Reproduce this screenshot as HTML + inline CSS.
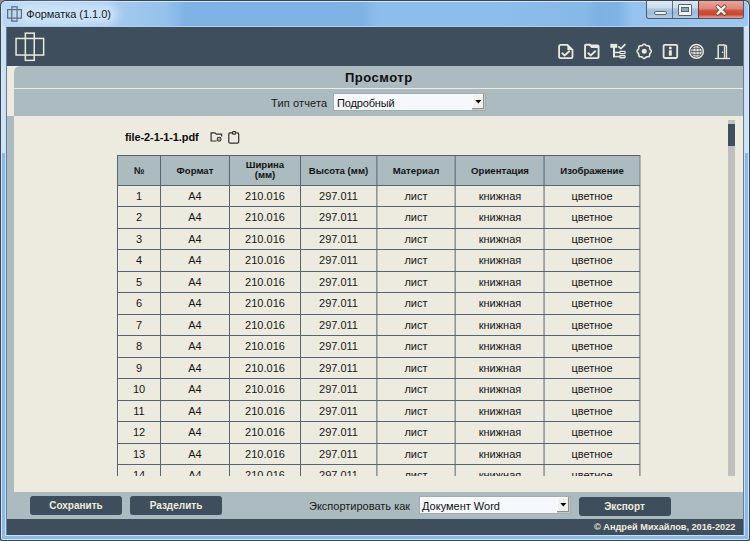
<!DOCTYPE html>
<html><head><meta charset="utf-8">
<style>
*{margin:0;padding:0;box-sizing:border-box}
html,body{width:750px;height:541px;overflow:hidden;background:#8d9297}
body{position:relative;font-family:"Liberation Sans",sans-serif;font-size:11px;color:#111}
.a{position:absolute}
.t{white-space:nowrap}
svg{overflow:visible}
</style></head><body>
<div class="a" style="left:0;top:0;width:750px;height:541px;border-radius:6px 6px 3px 3px;background:#3c4552"></div>
<div class="a" style="left:1px;top:1px;width:748px;height:539px;border-radius:5px 5px 2px 2px;background:#cfe6fb"></div>
<div class="a" style="left:2px;top:2px;width:746px;height:537px;border-radius:4px 4px 1px 1px;background:linear-gradient(180deg,#cfe3f6 0,#cfe3f6 151px,#8bbae9 151px,#8bbae9 100%)"></div>
<div class="a" style="left:2px;top:2px;width:746px;height:24px;border-radius:4px 4px 0 0;background:linear-gradient(90deg,#bcd8f4 0,#a9ccf0 98px,#95c2ed 163px,#80b3e5 183px,#7fb2e4 360px,#8cbdec 376px,#8dbdeb 498px,#86b8e8 583px,#7db0e3 598px,#80b3e5 616px,#95c3ef 630px,#9ec8f1 746px)"></div>
<div class="a" style="left:18px;top:4px;width:100px;height:20px;border-radius:10px;background:rgba(215,235,252,0.75);filter:blur(4px)"></div>
<div class="a" style="left:5px;top:26px;width:740px;height:510px;background:#c5e0fa"></div>
<div class="a" style="left:5px;top:26px;width:740px;height:1px;background:#b3cee8"></div>
<div class="a" style="left:6px;top:27px;width:738px;height:508px;background:#6a7d92"></div>
<svg class="a" style="left:0;top:0" width="30" height="27">
 <rect x="7.6" y="9.6" width="13.8" height="8.5" fill="none" stroke="#5b6d7e" stroke-width="1.2"/>
 <rect x="11.8" y="6.8" width="5.3" height="14.4" fill="none" stroke="#5b6d7e" stroke-width="1.2"/>
</svg>
<div class="a t" style="left:26.3px;top:6.49px;font-size:11px;line-height:16px;font-weight:400;color:#141a22;letter-spacing:-0.03px;">Форматка (1.1.0)</div>
<div class="a" style="left:646px;top:1px;width:98px;height:18px;border:1px solid #4f5a68;border-top:none;border-radius:0 0 3px 3px;overflow:hidden;background:linear-gradient(#dce8f4 0,#c9dbee 7px,#a9c4df 8px,#9dbcdb 12px,#b3cce6 17px)">
  <div class="a" style="left:25px;top:0;width:1px;height:18px;background:#5f6f82"></div>
  <div class="a" style="left:51px;top:0;width:46px;height:18px;background:linear-gradient(#eca59c 0,#e3968b 4px,#dd8578 8px,#cf5640 9px,#c9452f 14px,#dc8073 15px,#e2948a 17px)"></div>
  <div class="a" style="left:51px;top:0;width:1px;height:18px;background:#5a4040"></div>
  <div class="a" style="left:7px;top:10px;width:13px;height:4px;background:#f4f4f0;border:1px solid #566477;border-radius:2px"></div>
  <div class="a" style="left:31px;top:3px;width:14px;height:12px;border:1px solid #566477;background:#f6f6f2;border-radius:1px"></div>
  <div class="a" style="left:34px;top:6px;width:8px;height:5px;background:#8aa6c4;border:1px solid #566477"></div>
  <svg class="a" style="left:64px;top:3px" width="18" height="13" viewBox="0 0 18 13"><path d="M6.6,2.7 L13.5,9.6 M13.5,2.7 L6.6,9.6" stroke="#5a3a36" stroke-width="4" stroke-linecap="round"/><path d="M6.6,2.7 L13.5,9.6 M13.5,2.7 L6.6,9.6" stroke="#f6f2ea" stroke-width="2.6" stroke-linecap="round"/></svg>
</div>
<div class="a" style="left:7px;top:27px;width:736px;height:508px;background:#abbbbf;"></div>
<div class="a" style="left:7px;top:27px;width:736px;height:39px;background:#3f4e5c;"></div>
<svg class="a" style="left:0;top:0" width="60" height="66">
  <rect x="16.05" y="38.45" width="27.6" height="16.6" fill="none" stroke="#e9e8dc" stroke-width="1.5"/>
  <rect x="25.35" y="33.15" width="8.9" height="27.2" fill="none" stroke="#e9e8dc" stroke-width="1.5"/>
</svg>
<svg class="a" style="left:0;top:0" width="750" height="66">
 <g fill="none" stroke="#e9e8dc" stroke-width="2" stroke-linejoin="miter">
  <path d="M560.7,44.8 H567.4 L572.5,49.9 V56.5 Q572.5,58.1 570.9,58.1 H560.7 Q559.1,58.1 559.1,56.5 V46.4 Q559.1,44.8 560.7,44.8 Z" stroke-width="1.8"/>
  <path d="M562.3,53.3 L564.8,55.4 L569.2,51.3" stroke-linecap="round" stroke-width="1.9" stroke-linejoin="round"/>
  <path d="M585.9,43.8 H590.2 L591.2,44.6 H597.7 Q599.5,44.6 599.5,46.4 V57.3 Q599.5,59.1 597.7,59.1 H585.9 Q584.1,59.1 584.1,57.3 V45.6 Q584.1,43.8 585.9,43.8 Z M586,45.7 V57.2 H597.6 V48.1 H591.3 L589.3,45.7 Z" fill="#e9e8dc" stroke="none" fill-rule="evenodd"/>
  <path d="M588.3,53.3 L590.8,55.4 L595.2,51.3" stroke-linecap="round" stroke-width="1.9" stroke-linejoin="round"/>
  <path d="M618.9,46.9 L620.9,48.6 L624.8,44.7" stroke-width="1.7" stroke-linecap="square"/>
  <rect x="619.85" y="51.45" width="5.2" height="2.1" rx="0.5" stroke-width="1.3"/>
  <rect x="619.85" y="55.65" width="5.2" height="2.1" rx="0.5" stroke-width="1.3"/>
  <path d="M644.20,44.20 L644.48,44.23 L644.75,44.32 L645.01,44.45 L645.26,44.63 L645.49,44.83 L645.70,45.03 L645.91,45.23 L646.11,45.41 L646.32,45.55 L646.53,45.66 L646.76,45.74 L647.01,45.78 L647.28,45.80 L647.57,45.80 L647.87,45.81 L648.17,45.84 L648.47,45.89 L648.75,45.97 L649.00,46.10 L649.22,46.28 L649.40,46.50 L649.53,46.75 L649.61,47.03 L649.66,47.33 L649.69,47.63 L649.70,47.93 L649.70,48.22 L649.72,48.49 L649.76,48.74 L649.84,48.97 L649.95,49.18 L650.09,49.39 L650.27,49.59 L650.47,49.80 L650.67,50.01 L650.87,50.24 L651.05,50.49 L651.18,50.75 L651.27,51.02 L651.30,51.30 L651.27,51.58 L651.18,51.85 L651.05,52.11 L650.87,52.36 L650.67,52.59 L650.47,52.80 L650.27,53.01 L650.09,53.21 L649.95,53.42 L649.84,53.63 L649.76,53.86 L649.72,54.11 L649.70,54.38 L649.70,54.67 L649.69,54.97 L649.66,55.27 L649.61,55.57 L649.53,55.85 L649.40,56.10 L649.22,56.32 L649.00,56.50 L648.75,56.63 L648.47,56.71 L648.17,56.76 L647.87,56.79 L647.57,56.80 L647.28,56.80 L647.01,56.82 L646.76,56.86 L646.53,56.94 L646.32,57.05 L646.11,57.19 L645.91,57.37 L645.70,57.57 L645.49,57.77 L645.26,57.97 L645.01,58.15 L644.75,58.28 L644.48,58.37 L644.20,58.40 L643.92,58.37 L643.65,58.28 L643.39,58.15 L643.14,57.97 L642.91,57.77 L642.70,57.57 L642.49,57.37 L642.29,57.19 L642.08,57.05 L641.87,56.94 L641.64,56.86 L641.39,56.82 L641.12,56.80 L640.83,56.80 L640.53,56.79 L640.23,56.76 L639.93,56.71 L639.65,56.63 L639.40,56.50 L639.18,56.32 L639.00,56.10 L638.87,55.85 L638.79,55.57 L638.74,55.27 L638.71,54.97 L638.70,54.67 L638.70,54.38 L638.68,54.11 L638.64,53.86 L638.56,53.63 L638.45,53.42 L638.31,53.21 L638.13,53.01 L637.93,52.80 L637.73,52.59 L637.53,52.36 L637.35,52.11 L637.22,51.85 L637.13,51.58 L637.10,51.30 L637.13,51.02 L637.22,50.75 L637.35,50.49 L637.53,50.24 L637.73,50.01 L637.93,49.80 L638.13,49.59 L638.31,49.39 L638.45,49.18 L638.56,48.97 L638.64,48.74 L638.68,48.49 L638.70,48.22 L638.70,47.93 L638.71,47.63 L638.74,47.33 L638.79,47.03 L638.87,46.75 L639.00,46.50 L639.18,46.28 L639.40,46.10 L639.65,45.97 L639.93,45.89 L640.23,45.84 L640.53,45.81 L640.83,45.80 L641.12,45.80 L641.39,45.78 L641.64,45.74 L641.87,45.66 L642.08,45.55 L642.29,45.41 L642.49,45.23 L642.70,45.03 L642.91,44.83 L643.14,44.63 L643.39,44.45 L643.65,44.32 L643.92,44.23 L644.20,44.20 Z" stroke-width="1.6"/>
  <rect x="663.6" y="44.8" width="13.6" height="13.2" rx="1.2" stroke-width="1.8"/>
  <circle cx="696.4" cy="51.4" r="6.95" stroke-width="1.5"/>
  
  <path d="M718.2,58 V45.8 Q718.2,44.9 719.1,44.9 H724.3 L726.4,46 V58" stroke-width="1.5"/><path d="M724.4,45.4 V58" stroke-width="1.1"/>
  <path d="M714.9,58.5 H730.1" stroke-width="1.3"/>
 </g>
 <g fill="#e9e8dc">
  <path d="M567.4,44.8 L572.5,49.9 H567.4 Z"/>
  <rect x="610.3" y="43.9" width="6.9" height="3.9"/>
  <rect x="613" y="47" width="2" height="10.3"/>
  <rect x="613" y="51.7" width="6.5" height="1.5"/>
  <rect x="613" y="55.8" width="6.5" height="1.5"/>
  <circle cx="644.2" cy="51.3" r="2.5"/>
  <circle cx="670.3" cy="47.9" r="1.5"/>
  <rect x="668.9" y="50.3" width="2.9" height="5.4"/>
  <circle cx="722.6" cy="52.2" r="0.8"/>
 </g>
 <circle cx="696.4" cy="51.4" r="5.3" fill="#e9e8dc"/>
 <g stroke="#3f4e5c" stroke-width="0.75" fill="none">
  <clipPath id="gc"><circle cx="696.4" cy="51.4" r="5.3"/></clipPath>
  <g clip-path="url(#gc)">
   <path d="M690,48.4 H703 M690,51.5 H703 M690,54.6 H703 M692.9,44 V59 M696,44 V59 M699.1,44 V59"/>
  </g>
 </g>
</svg>
<div class="a" style="left:7px;top:66px;width:14px;height:50px;background:#edebdf;"></div>
<div class="a" style="left:14px;top:66px;width:729px;height:50px;background:#abbbbf;border-radius:6px 0 0 0;"></div>
<div class="a" style="left:14px;top:88px;width:729px;height:1px;background:#edebdf;"></div>
<div class="a t" style="left:345px;top:67.70px;font-size:13px;line-height:20px;font-weight:700;color:#0e0e0e;letter-spacing:0.5px;">Просмотр</div>
<div class="a t" style="left:271px;top:94.89px;font-size:11px;line-height:16px;font-weight:400;color:#1a1a1a;letter-spacing:0.15px;">Тип отчета</div>
<div class="a" style="left:333px;top:93px;width:153px;height:18px;background:#f5f8fc;border:1px solid #a6abae;"></div>
<div class="a t" style="left:337px;top:94.89px;font-size:11px;line-height:16px;font-weight:400;color:#111;letter-spacing:-0.15px;">Подробный</div>
<div class="a" style="left:472px;top:94px;width:13px;height:16px;background:#f1f1ef;box-shadow:inset -1px -1px #8f8f8f,inset 1px 1px #fdfdfd;border-right:1px solid #c9c9c7;border-bottom:1px solid #c9c9c7;"></div>
<svg class="a" style="left:0;top:0" width="750" height="541"><path d="M475.3,100 H481.3 L478.3,103.4 Z" fill="#000"/></svg>
<div class="a" style="left:7px;top:116px;width:7px;height:376px;background:#abbbbf;"></div>
<div class="a" style="left:14px;top:116px;width:729px;height:376px;background:#edebdf;"></div>
<div class="a t" style="left:125px;top:129.39px;font-size:11px;line-height:16px;font-weight:700;color:#0e0e0e;letter-spacing:-0.1px;">file-2-1-1-1.pdf</div>
<svg class="a" style="left:0;top:0" width="250" height="150">
 <g fill="none" stroke="#2e2e2e" stroke-width="1.2">
  <path d="M216.6,141 H211.1 V132.8 H214.9 L216.4,134.2 H221.6 V136.6"/>
  <circle cx="219.1" cy="139.2" r="1.9" stroke-width="1.1"/>
  <path d="M232,132.8 H230.2 Q228.8,132.8 228.8,134.2 V142.1 Q228.8,143.2 230.2,143.2 H237.4 Q238.7,143.2 238.7,142.1 V134.2 Q238.7,132.8 237.4,132.8 H236.6"/>
  <rect x="232.4" y="131.6" width="3.5" height="2.5" rx="1"/>
 </g>
 <g fill="#2e2e2e"><circle cx="219.1" cy="139.1" r="0.7"/></g>
</svg>
<div class="a" style="left:0;top:0;width:750px;height:476px;overflow:hidden">
<div class="a" style="left:117px;top:155px;width:522px;height:30px;background:#abbbbf;"></div>
<div class="a" style="left:117px;top:155px;width:1px;height:321px;background:#56656f;"></div>
<div class="a" style="left:160px;top:155px;width:1px;height:321px;background:#56656f;"></div>
<div class="a" style="left:229px;top:155px;width:1px;height:321px;background:#56656f;"></div>
<div class="a" style="left:300px;top:155px;width:1px;height:321px;background:#56656f;"></div>
<div class="a" style="left:376px;top:155px;width:1px;height:321px;background:#56656f;opacity:0.62;"></div>
<div class="a" style="left:377px;top:155px;width:1px;height:321px;background:#56656f;opacity:0.38;"></div>
<div class="a" style="left:454px;top:155px;width:1px;height:321px;background:#56656f;opacity:0.35;"></div>
<div class="a" style="left:455px;top:155px;width:1px;height:321px;background:#56656f;opacity:0.65;"></div>
<div class="a" style="left:543px;top:155px;width:1px;height:321px;background:#56656f;opacity:0.45;"></div>
<div class="a" style="left:544px;top:155px;width:1px;height:321px;background:#56656f;opacity:0.55;"></div>
<div class="a" style="left:639px;top:155px;width:1px;height:321px;background:#56656f;opacity:0.6;"></div>
<div class="a" style="left:640px;top:155px;width:1px;height:321px;background:#56656f;opacity:0.4;"></div>
<div class="a" style="left:117px;top:155px;width:523px;height:1px;background:#56656f;"></div>
<div class="a" style="left:117px;top:185px;width:523px;height:1px;background:#56656f;"></div>
<div class="a" style="left:117px;top:206px;width:523px;height:1px;background:#56656f;"></div>
<div class="a" style="left:117px;top:228px;width:523px;height:1px;background:#56656f;"></div>
<div class="a" style="left:117px;top:249px;width:523px;height:1px;background:#56656f;"></div>
<div class="a" style="left:117px;top:271px;width:523px;height:1px;background:#56656f;"></div>
<div class="a" style="left:117px;top:292px;width:523px;height:1px;background:#56656f;"></div>
<div class="a" style="left:117px;top:314px;width:523px;height:1px;background:#56656f;"></div>
<div class="a" style="left:117px;top:335px;width:523px;height:1px;background:#56656f;"></div>
<div class="a" style="left:117px;top:357px;width:523px;height:1px;background:#56656f;"></div>
<div class="a" style="left:117px;top:378px;width:523px;height:1px;background:#56656f;"></div>
<div class="a" style="left:117px;top:400px;width:523px;height:1px;background:#56656f;"></div>
<div class="a" style="left:117px;top:421px;width:523px;height:1px;background:#56656f;"></div>
<div class="a" style="left:117px;top:443px;width:523px;height:1px;background:#56656f;"></div>
<div class="a" style="left:117px;top:464px;width:523px;height:1px;background:#56656f;"></div>
<div class="a" style="left:117px;top:486px;width:523px;height:1px;background:#56656f;"></div>
<div class="a t" style="left:118px;top:163.87px;font-size:9.6px;line-height:14px;font-weight:700;color:#141414;width:42px;text-align:center;">№</div>
<div class="a t" style="left:161px;top:163.87px;font-size:9.6px;line-height:14px;font-weight:700;color:#141414;width:68px;text-align:center;">Формат</div>
<div class="a t" style="left:230px;top:158.47px;font-size:9.6px;line-height:14px;font-weight:700;color:#141414;width:70px;text-align:center;">Ширина</div>
<div class="a t" style="left:230px;top:168.47px;font-size:9.6px;line-height:14px;font-weight:700;color:#141414;width:70px;text-align:center;">(мм)</div>
<div class="a t" style="left:301px;top:163.87px;font-size:9.6px;line-height:14px;font-weight:700;color:#141414;width:75px;text-align:center;">Высота (мм)</div>
<div class="a t" style="left:377px;top:163.87px;font-size:9.6px;line-height:14px;font-weight:700;color:#141414;width:78px;text-align:center;">Материал</div>
<div class="a t" style="left:456px;top:163.87px;font-size:9.6px;line-height:14px;font-weight:700;color:#141414;width:88px;text-align:center;">Ориентация</div>
<div class="a t" style="left:545px;top:163.87px;font-size:9.6px;line-height:14px;font-weight:700;color:#141414;width:94px;text-align:center;">Изображение</div>
<div class="a t" style="left:118px;top:187.89px;font-size:11px;line-height:16px;font-weight:400;color:#161616;width:42px;text-align:center;">1</div>
<div class="a t" style="left:161px;top:187.89px;font-size:11px;line-height:16px;font-weight:400;color:#161616;width:68px;text-align:center;">A4</div>
<div class="a t" style="left:230px;top:187.89px;font-size:11px;line-height:16px;font-weight:400;color:#161616;width:70px;text-align:center;">210.016</div>
<div class="a t" style="left:301px;top:187.89px;font-size:11px;line-height:16px;font-weight:400;color:#161616;width:75px;text-align:center;">297.011</div>
<div class="a t" style="left:377px;top:187.89px;font-size:11px;line-height:16px;font-weight:400;color:#161616;width:78px;text-align:center;">лист</div>
<div class="a t" style="left:456px;top:187.89px;font-size:11px;line-height:16px;font-weight:400;color:#161616;width:88px;text-align:center;">книжная</div>
<div class="a t" style="left:545px;top:187.89px;font-size:11px;line-height:16px;font-weight:400;color:#161616;width:94px;text-align:center;">цветное</div>
<div class="a t" style="left:118px;top:208.89px;font-size:11px;line-height:16px;font-weight:400;color:#161616;width:42px;text-align:center;">2</div>
<div class="a t" style="left:161px;top:208.89px;font-size:11px;line-height:16px;font-weight:400;color:#161616;width:68px;text-align:center;">A4</div>
<div class="a t" style="left:230px;top:208.89px;font-size:11px;line-height:16px;font-weight:400;color:#161616;width:70px;text-align:center;">210.016</div>
<div class="a t" style="left:301px;top:208.89px;font-size:11px;line-height:16px;font-weight:400;color:#161616;width:75px;text-align:center;">297.011</div>
<div class="a t" style="left:377px;top:208.89px;font-size:11px;line-height:16px;font-weight:400;color:#161616;width:78px;text-align:center;">лист</div>
<div class="a t" style="left:456px;top:208.89px;font-size:11px;line-height:16px;font-weight:400;color:#161616;width:88px;text-align:center;">книжная</div>
<div class="a t" style="left:545px;top:208.89px;font-size:11px;line-height:16px;font-weight:400;color:#161616;width:94px;text-align:center;">цветное</div>
<div class="a t" style="left:118px;top:230.89px;font-size:11px;line-height:16px;font-weight:400;color:#161616;width:42px;text-align:center;">3</div>
<div class="a t" style="left:161px;top:230.89px;font-size:11px;line-height:16px;font-weight:400;color:#161616;width:68px;text-align:center;">A4</div>
<div class="a t" style="left:230px;top:230.89px;font-size:11px;line-height:16px;font-weight:400;color:#161616;width:70px;text-align:center;">210.016</div>
<div class="a t" style="left:301px;top:230.89px;font-size:11px;line-height:16px;font-weight:400;color:#161616;width:75px;text-align:center;">297.011</div>
<div class="a t" style="left:377px;top:230.89px;font-size:11px;line-height:16px;font-weight:400;color:#161616;width:78px;text-align:center;">лист</div>
<div class="a t" style="left:456px;top:230.89px;font-size:11px;line-height:16px;font-weight:400;color:#161616;width:88px;text-align:center;">книжная</div>
<div class="a t" style="left:545px;top:230.89px;font-size:11px;line-height:16px;font-weight:400;color:#161616;width:94px;text-align:center;">цветное</div>
<div class="a t" style="left:118px;top:251.89px;font-size:11px;line-height:16px;font-weight:400;color:#161616;width:42px;text-align:center;">4</div>
<div class="a t" style="left:161px;top:251.89px;font-size:11px;line-height:16px;font-weight:400;color:#161616;width:68px;text-align:center;">A4</div>
<div class="a t" style="left:230px;top:251.89px;font-size:11px;line-height:16px;font-weight:400;color:#161616;width:70px;text-align:center;">210.016</div>
<div class="a t" style="left:301px;top:251.89px;font-size:11px;line-height:16px;font-weight:400;color:#161616;width:75px;text-align:center;">297.011</div>
<div class="a t" style="left:377px;top:251.89px;font-size:11px;line-height:16px;font-weight:400;color:#161616;width:78px;text-align:center;">лист</div>
<div class="a t" style="left:456px;top:251.89px;font-size:11px;line-height:16px;font-weight:400;color:#161616;width:88px;text-align:center;">книжная</div>
<div class="a t" style="left:545px;top:251.89px;font-size:11px;line-height:16px;font-weight:400;color:#161616;width:94px;text-align:center;">цветное</div>
<div class="a t" style="left:118px;top:273.89px;font-size:11px;line-height:16px;font-weight:400;color:#161616;width:42px;text-align:center;">5</div>
<div class="a t" style="left:161px;top:273.89px;font-size:11px;line-height:16px;font-weight:400;color:#161616;width:68px;text-align:center;">A4</div>
<div class="a t" style="left:230px;top:273.89px;font-size:11px;line-height:16px;font-weight:400;color:#161616;width:70px;text-align:center;">210.016</div>
<div class="a t" style="left:301px;top:273.89px;font-size:11px;line-height:16px;font-weight:400;color:#161616;width:75px;text-align:center;">297.011</div>
<div class="a t" style="left:377px;top:273.89px;font-size:11px;line-height:16px;font-weight:400;color:#161616;width:78px;text-align:center;">лист</div>
<div class="a t" style="left:456px;top:273.89px;font-size:11px;line-height:16px;font-weight:400;color:#161616;width:88px;text-align:center;">книжная</div>
<div class="a t" style="left:545px;top:273.89px;font-size:11px;line-height:16px;font-weight:400;color:#161616;width:94px;text-align:center;">цветное</div>
<div class="a t" style="left:118px;top:294.89px;font-size:11px;line-height:16px;font-weight:400;color:#161616;width:42px;text-align:center;">6</div>
<div class="a t" style="left:161px;top:294.89px;font-size:11px;line-height:16px;font-weight:400;color:#161616;width:68px;text-align:center;">A4</div>
<div class="a t" style="left:230px;top:294.89px;font-size:11px;line-height:16px;font-weight:400;color:#161616;width:70px;text-align:center;">210.016</div>
<div class="a t" style="left:301px;top:294.89px;font-size:11px;line-height:16px;font-weight:400;color:#161616;width:75px;text-align:center;">297.011</div>
<div class="a t" style="left:377px;top:294.89px;font-size:11px;line-height:16px;font-weight:400;color:#161616;width:78px;text-align:center;">лист</div>
<div class="a t" style="left:456px;top:294.89px;font-size:11px;line-height:16px;font-weight:400;color:#161616;width:88px;text-align:center;">книжная</div>
<div class="a t" style="left:545px;top:294.89px;font-size:11px;line-height:16px;font-weight:400;color:#161616;width:94px;text-align:center;">цветное</div>
<div class="a t" style="left:118px;top:316.89px;font-size:11px;line-height:16px;font-weight:400;color:#161616;width:42px;text-align:center;">7</div>
<div class="a t" style="left:161px;top:316.89px;font-size:11px;line-height:16px;font-weight:400;color:#161616;width:68px;text-align:center;">A4</div>
<div class="a t" style="left:230px;top:316.89px;font-size:11px;line-height:16px;font-weight:400;color:#161616;width:70px;text-align:center;">210.016</div>
<div class="a t" style="left:301px;top:316.89px;font-size:11px;line-height:16px;font-weight:400;color:#161616;width:75px;text-align:center;">297.011</div>
<div class="a t" style="left:377px;top:316.89px;font-size:11px;line-height:16px;font-weight:400;color:#161616;width:78px;text-align:center;">лист</div>
<div class="a t" style="left:456px;top:316.89px;font-size:11px;line-height:16px;font-weight:400;color:#161616;width:88px;text-align:center;">книжная</div>
<div class="a t" style="left:545px;top:316.89px;font-size:11px;line-height:16px;font-weight:400;color:#161616;width:94px;text-align:center;">цветное</div>
<div class="a t" style="left:118px;top:337.89px;font-size:11px;line-height:16px;font-weight:400;color:#161616;width:42px;text-align:center;">8</div>
<div class="a t" style="left:161px;top:337.89px;font-size:11px;line-height:16px;font-weight:400;color:#161616;width:68px;text-align:center;">A4</div>
<div class="a t" style="left:230px;top:337.89px;font-size:11px;line-height:16px;font-weight:400;color:#161616;width:70px;text-align:center;">210.016</div>
<div class="a t" style="left:301px;top:337.89px;font-size:11px;line-height:16px;font-weight:400;color:#161616;width:75px;text-align:center;">297.011</div>
<div class="a t" style="left:377px;top:337.89px;font-size:11px;line-height:16px;font-weight:400;color:#161616;width:78px;text-align:center;">лист</div>
<div class="a t" style="left:456px;top:337.89px;font-size:11px;line-height:16px;font-weight:400;color:#161616;width:88px;text-align:center;">книжная</div>
<div class="a t" style="left:545px;top:337.89px;font-size:11px;line-height:16px;font-weight:400;color:#161616;width:94px;text-align:center;">цветное</div>
<div class="a t" style="left:118px;top:359.89px;font-size:11px;line-height:16px;font-weight:400;color:#161616;width:42px;text-align:center;">9</div>
<div class="a t" style="left:161px;top:359.89px;font-size:11px;line-height:16px;font-weight:400;color:#161616;width:68px;text-align:center;">A4</div>
<div class="a t" style="left:230px;top:359.89px;font-size:11px;line-height:16px;font-weight:400;color:#161616;width:70px;text-align:center;">210.016</div>
<div class="a t" style="left:301px;top:359.89px;font-size:11px;line-height:16px;font-weight:400;color:#161616;width:75px;text-align:center;">297.011</div>
<div class="a t" style="left:377px;top:359.89px;font-size:11px;line-height:16px;font-weight:400;color:#161616;width:78px;text-align:center;">лист</div>
<div class="a t" style="left:456px;top:359.89px;font-size:11px;line-height:16px;font-weight:400;color:#161616;width:88px;text-align:center;">книжная</div>
<div class="a t" style="left:545px;top:359.89px;font-size:11px;line-height:16px;font-weight:400;color:#161616;width:94px;text-align:center;">цветное</div>
<div class="a t" style="left:118px;top:380.89px;font-size:11px;line-height:16px;font-weight:400;color:#161616;width:42px;text-align:center;">10</div>
<div class="a t" style="left:161px;top:380.89px;font-size:11px;line-height:16px;font-weight:400;color:#161616;width:68px;text-align:center;">A4</div>
<div class="a t" style="left:230px;top:380.89px;font-size:11px;line-height:16px;font-weight:400;color:#161616;width:70px;text-align:center;">210.016</div>
<div class="a t" style="left:301px;top:380.89px;font-size:11px;line-height:16px;font-weight:400;color:#161616;width:75px;text-align:center;">297.011</div>
<div class="a t" style="left:377px;top:380.89px;font-size:11px;line-height:16px;font-weight:400;color:#161616;width:78px;text-align:center;">лист</div>
<div class="a t" style="left:456px;top:380.89px;font-size:11px;line-height:16px;font-weight:400;color:#161616;width:88px;text-align:center;">книжная</div>
<div class="a t" style="left:545px;top:380.89px;font-size:11px;line-height:16px;font-weight:400;color:#161616;width:94px;text-align:center;">цветное</div>
<div class="a t" style="left:118px;top:402.89px;font-size:11px;line-height:16px;font-weight:400;color:#161616;width:42px;text-align:center;">11</div>
<div class="a t" style="left:161px;top:402.89px;font-size:11px;line-height:16px;font-weight:400;color:#161616;width:68px;text-align:center;">A4</div>
<div class="a t" style="left:230px;top:402.89px;font-size:11px;line-height:16px;font-weight:400;color:#161616;width:70px;text-align:center;">210.016</div>
<div class="a t" style="left:301px;top:402.89px;font-size:11px;line-height:16px;font-weight:400;color:#161616;width:75px;text-align:center;">297.011</div>
<div class="a t" style="left:377px;top:402.89px;font-size:11px;line-height:16px;font-weight:400;color:#161616;width:78px;text-align:center;">лист</div>
<div class="a t" style="left:456px;top:402.89px;font-size:11px;line-height:16px;font-weight:400;color:#161616;width:88px;text-align:center;">книжная</div>
<div class="a t" style="left:545px;top:402.89px;font-size:11px;line-height:16px;font-weight:400;color:#161616;width:94px;text-align:center;">цветное</div>
<div class="a t" style="left:118px;top:423.89px;font-size:11px;line-height:16px;font-weight:400;color:#161616;width:42px;text-align:center;">12</div>
<div class="a t" style="left:161px;top:423.89px;font-size:11px;line-height:16px;font-weight:400;color:#161616;width:68px;text-align:center;">A4</div>
<div class="a t" style="left:230px;top:423.89px;font-size:11px;line-height:16px;font-weight:400;color:#161616;width:70px;text-align:center;">210.016</div>
<div class="a t" style="left:301px;top:423.89px;font-size:11px;line-height:16px;font-weight:400;color:#161616;width:75px;text-align:center;">297.011</div>
<div class="a t" style="left:377px;top:423.89px;font-size:11px;line-height:16px;font-weight:400;color:#161616;width:78px;text-align:center;">лист</div>
<div class="a t" style="left:456px;top:423.89px;font-size:11px;line-height:16px;font-weight:400;color:#161616;width:88px;text-align:center;">книжная</div>
<div class="a t" style="left:545px;top:423.89px;font-size:11px;line-height:16px;font-weight:400;color:#161616;width:94px;text-align:center;">цветное</div>
<div class="a t" style="left:118px;top:445.89px;font-size:11px;line-height:16px;font-weight:400;color:#161616;width:42px;text-align:center;">13</div>
<div class="a t" style="left:161px;top:445.89px;font-size:11px;line-height:16px;font-weight:400;color:#161616;width:68px;text-align:center;">A4</div>
<div class="a t" style="left:230px;top:445.89px;font-size:11px;line-height:16px;font-weight:400;color:#161616;width:70px;text-align:center;">210.016</div>
<div class="a t" style="left:301px;top:445.89px;font-size:11px;line-height:16px;font-weight:400;color:#161616;width:75px;text-align:center;">297.011</div>
<div class="a t" style="left:377px;top:445.89px;font-size:11px;line-height:16px;font-weight:400;color:#161616;width:78px;text-align:center;">лист</div>
<div class="a t" style="left:456px;top:445.89px;font-size:11px;line-height:16px;font-weight:400;color:#161616;width:88px;text-align:center;">книжная</div>
<div class="a t" style="left:545px;top:445.89px;font-size:11px;line-height:16px;font-weight:400;color:#161616;width:94px;text-align:center;">цветное</div>
<div class="a t" style="left:118px;top:466.89px;font-size:11px;line-height:16px;font-weight:400;color:#161616;width:42px;text-align:center;">14</div>
<div class="a t" style="left:161px;top:466.89px;font-size:11px;line-height:16px;font-weight:400;color:#161616;width:68px;text-align:center;">A4</div>
<div class="a t" style="left:230px;top:466.89px;font-size:11px;line-height:16px;font-weight:400;color:#161616;width:70px;text-align:center;">210.016</div>
<div class="a t" style="left:301px;top:466.89px;font-size:11px;line-height:16px;font-weight:400;color:#161616;width:75px;text-align:center;">297.011</div>
<div class="a t" style="left:377px;top:466.89px;font-size:11px;line-height:16px;font-weight:400;color:#161616;width:78px;text-align:center;">лист</div>
<div class="a t" style="left:456px;top:466.89px;font-size:11px;line-height:16px;font-weight:400;color:#161616;width:88px;text-align:center;">книжная</div>
<div class="a t" style="left:545px;top:466.89px;font-size:11px;line-height:16px;font-weight:400;color:#161616;width:94px;text-align:center;">цветное</div>
</div>
<div class="a" style="left:728px;top:120px;width:7px;height:356px;background:#c0c0c0;"></div>
<div class="a" style="left:728px;top:124px;width:7px;height:22px;background:#3f4e5c;"></div>
<div class="a" style="left:30px;top:496px;width:92px;height:19px;background:#3f4e5c;border-radius:3px;"></div>
<div class="a" style="left:130px;top:496px;width:92px;height:19px;background:#3f4e5c;border-radius:3px;"></div>
<div class="a t" style="left:30px;top:498.24px;font-size:10px;line-height:15px;font-weight:700;color:#eeecdf;width:92px;text-align:center;">Сохранить</div>
<div class="a t" style="left:130px;top:498.24px;font-size:10px;line-height:15px;font-weight:700;color:#eeecdf;width:92px;text-align:center;">Разделить</div>
<div class="a t" style="left:309px;top:497.69px;font-size:11px;line-height:16px;font-weight:400;color:#1a1a1a;">Экспортировать как</div>
<div class="a" style="left:419px;top:496px;width:152px;height:18px;background:#f5f8fc;border:1px solid #a6abae;"></div>
<div class="a t" style="left:422px;top:497.69px;font-size:11px;line-height:16px;font-weight:400;color:#111;">Документ Word</div>
<div class="a" style="left:557px;top:497px;width:13px;height:16px;background:#f1f1ef;box-shadow:inset -1px -1px #8f8f8f,inset 1px 1px #fdfdfd;border-right:1px solid #c9c9c7;border-bottom:1px solid #c9c9c7;"></div>
<svg class="a" style="left:0;top:0" width="750" height="541"><path d="M560.3,503 H566.3 L563.3,506.4 Z" fill="#000"/></svg>
<div class="a" style="left:579px;top:497px;width:92px;height:19px;background:#3f4e5c;border-radius:3px;"></div>
<div class="a t" style="left:578.5px;top:499.04px;font-size:10px;line-height:15px;font-weight:700;color:#eeecdf;width:92px;text-align:center;">Экспорт</div>
<div class="a" style="left:7px;top:519px;width:736px;height:16px;background:#3f4e5c;"></div>
<div class="a t" style="left:594px;top:519.61px;font-size:9.2px;line-height:14px;font-weight:700;color:#eeecdf;">© Андрей Михайлов, 2016-2022</div>
</body></html>
